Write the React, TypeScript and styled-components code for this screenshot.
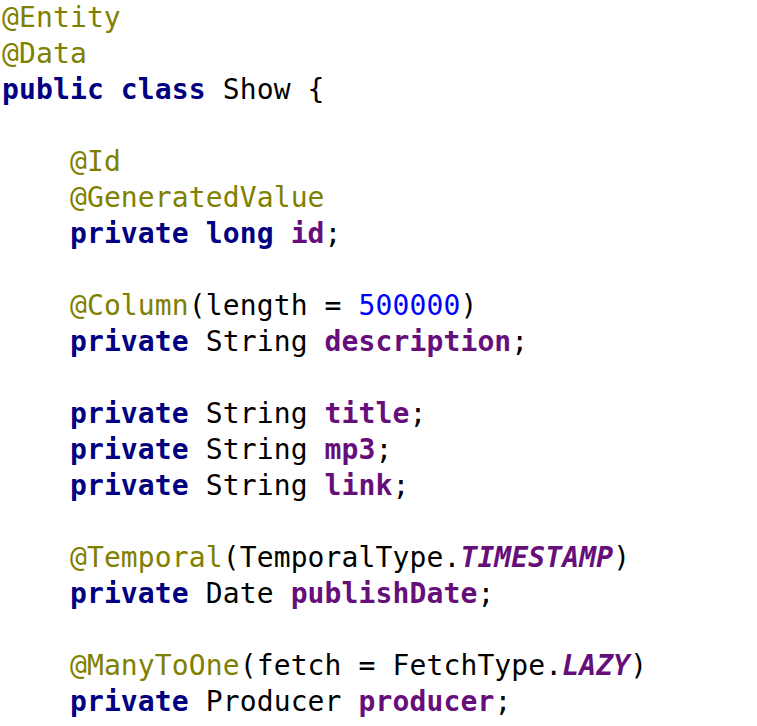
import React from "react";
import styled, { createGlobalStyle } from "styled-components";

const Global = createGlobalStyle`
  html, body { margin: 0; padding: 0; background: #ffffff; }
`;

type Kind = "plain" | "ann" | "kw" | "field" | "num" | "const";

const Code = styled.pre`
  margin: 0;
  padding: 0 0 0 2px;
  font-family: "DejaVu Sans Mono", "Liberation Mono", monospace;
  font-size: 28px;
  letter-spacing: 0.12px;
  line-height: 36px;
  color: #000000;
  white-space: pre;
`;

const Line = styled.div`
  height: 36px;
`;

const colors: Record<Kind, string> = {
  plain: "#000000",
  ann: "#808000",
  kw: "#000080",
  field: "#660e7a",
  num: "#0000ff",
  const: "#660e7a",
};

const Tok = styled.span<{ $kind: Kind }>`
  color: ${(p) => colors[p.$kind]};
  font-weight: ${(p) => (p.$kind === "kw" || p.$kind === "field" || p.$kind === "const" ? 700 : 400)};
  font-style: ${(p) => (p.$kind === "const" ? "italic" : "normal")};
`;

type T = [Kind, string];
const I = "    ";

const lines: T[][] = [
  [["ann", "@Entity"]],
  [["ann", "@Data"]],
  [["kw", "public class"], ["plain", " Show {"]],
  [],
  [["plain", I], ["ann", "@Id"]],
  [["plain", I], ["ann", "@GeneratedValue"]],
  [["plain", I], ["kw", "private long"], ["plain", " "], ["field", "id"], ["plain", ";"]],
  [],
  [["plain", I], ["ann", "@Column"], ["plain", "(length = "], ["num", "500000"], ["plain", ")"]],
  [["plain", I], ["kw", "private"], ["plain", " String "], ["field", "description"], ["plain", ";"]],
  [],
  [["plain", I], ["kw", "private"], ["plain", " String "], ["field", "title"], ["plain", ";"]],
  [["plain", I], ["kw", "private"], ["plain", " String "], ["field", "mp3"], ["plain", ";"]],
  [["plain", I], ["kw", "private"], ["plain", " String "], ["field", "link"], ["plain", ";"]],
  [],
  [["plain", I], ["ann", "@Temporal"], ["plain", "(TemporalType."], ["const", "TIMESTAMP"], ["plain", ")"]],
  [["plain", I], ["kw", "private"], ["plain", " Date "], ["field", "publishDate"], ["plain", ";"]],
  [],
  [["plain", I], ["ann", "@ManyToOne"], ["plain", "(fetch = FetchType."], ["const", "LAZY"], ["plain", ")"]],
  [["plain", I], ["kw", "private"], ["plain", " Producer "], ["field", "producer"], ["plain", ";"]],
];

export default function App() {
  return (
    <>
      <Global />
      <Code>
        {lines.map((l, i) => (
          <Line key={i}>
            {l.map(([k, t], j) => (
              <Tok key={j} $kind={k}>
                {t}
              </Tok>
            ))}
          </Line>
        ))}
      </Code>
    </>
  );
}
